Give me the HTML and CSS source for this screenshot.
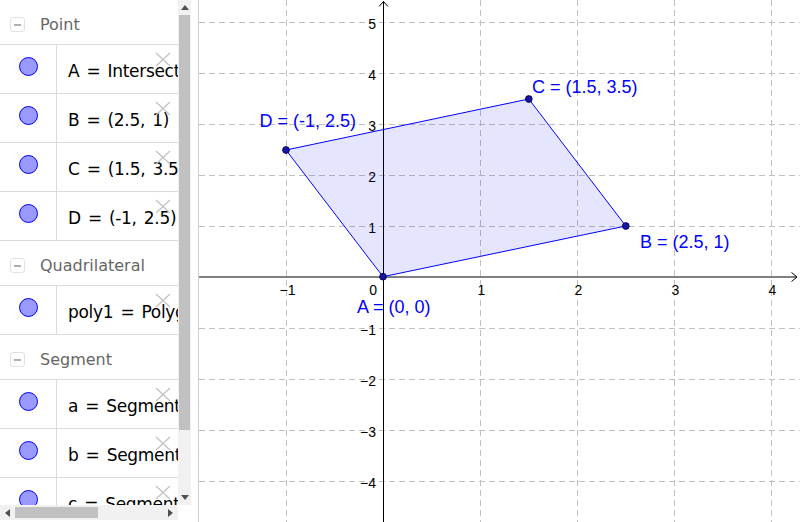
FILE: index.html
```html
<!DOCTYPE html>
<html>
<head>
<meta charset="utf-8">
<link rel="stylesheet" href="styles.css">
</head>
<body>
<div class="app">
  <div class="algebra">
    <div class="list">
      <div class="list-inner">
        <div class="hdr"><span class="toggle"></span><span class="title">Point</span></div>
        <div class="row"><div class="mark"><span class="dot"></span></div><div class="expr">A = Intersect(a, c)</div><svg class="del" viewBox="0 0 16 15"><path d="M1 1L15 14M15 1L1 14"/></svg></div>
        <div class="row"><div class="mark"><span class="dot"></span></div><div class="expr">B = (2.5, 1)</div><svg class="del" viewBox="0 0 16 15"><path d="M1 1L15 14M15 1L1 14"/></svg></div>
        <div class="row"><div class="mark"><span class="dot"></span></div><div class="expr">C = (1.5, 3.5)</div><svg class="del" viewBox="0 0 16 15"><path d="M1 1L15 14M15 1L1 14"/></svg></div>
        <div class="row"><div class="mark"><span class="dot"></span></div><div class="expr">D = (-1, 2.5)</div><svg class="del" viewBox="0 0 16 15"><path d="M1 1L15 14M15 1L1 14"/></svg></div>
        <div class="hdr"><span class="toggle"></span><span class="title">Quadrilateral</span></div>
        <div class="row"><div class="mark"><span class="dot"></span></div><div class="expr">poly1 = Polygon(A, B, C, D)</div><svg class="del" viewBox="0 0 16 15"><path d="M1 1L15 14M15 1L1 14"/></svg></div>
        <div class="hdr"><span class="toggle"></span><span class="title">Segment</span></div>
        <div class="row"><div class="mark"><span class="dot"></span></div><div class="expr">a = Segment(A, B)</div><svg class="del" viewBox="0 0 16 15"><path d="M1 1L15 14M15 1L1 14"/></svg></div>
        <div class="row"><div class="mark"><span class="dot"></span></div><div class="expr">b = Segment(B, C)</div><svg class="del" viewBox="0 0 16 15"><path d="M1 1L15 14M15 1L1 14"/></svg></div>
        <div class="row"><div class="mark"><span class="dot"></span></div><div class="expr">c = Segment(C, D)</div><svg class="del" viewBox="0 0 16 15"><path d="M1 1L15 14M15 1L1 14"/></svg></div>
      </div>
    </div>
    <div class="vscroll">
      <div class="arrow"><svg class="tri" viewBox="0 0 8 5"><path d="M0 5L4 0L8 5Z"/></svg></div>
      <div class="vthumb"></div>
      <div class="spacer"></div>
      <div class="arrow"><svg class="tri" viewBox="0 0 8 5"><path d="M0 0L8 0L4 5Z"/></svg></div>
    </div>
    <div class="hscroll">
      <div class="harrow"><svg class="trih" viewBox="0 0 5 8"><path d="M5 0L5 8L0 4Z"/></svg></div>
      <div class="hthumb"></div>
      <div class="spacer"></div>
      <div class="harrow"><svg class="trih" viewBox="0 0 5 8"><path d="M0 0L5 4L0 8Z"/></svg></div>
    </div>
    <div class="corner"></div>
  </div>
  <div class="split"></div>
  <div class="graph">
    <svg class="plot" viewBox="199 0 601 522" width="601" height="522">
      <g class="grid">
        <line x1="286.5" y1="0" x2="286.5" y2="522"/>
        <line x1="480.5" y1="0" x2="480.5" y2="522"/>
        <line x1="577.5" y1="0" x2="577.5" y2="522"/>
        <line x1="674.5" y1="0" x2="674.5" y2="522"/>
        <line x1="771.5" y1="0" x2="771.5" y2="522"/>
        <line x1="199" y1="22.5" x2="800" y2="22.5"/>
        <line x1="199" y1="73.5" x2="800" y2="73.5"/>
        <line x1="199" y1="124.5" x2="800" y2="124.5"/>
        <line x1="199" y1="175.5" x2="800" y2="175.5"/>
        <line x1="199" y1="226.5" x2="800" y2="226.5"/>
        <line x1="199" y1="328.5" x2="800" y2="328.5"/>
        <line x1="199" y1="379.5" x2="800" y2="379.5"/>
        <line x1="199" y1="430.5" x2="800" y2="430.5"/>
        <line x1="199" y1="481.5" x2="800" y2="481.5"/>
      </g>
      <g class="axis">
        <line x1="199" y1="277" x2="797" y2="277"/>
        <line x1="383.5" y1="1.5" x2="383.5" y2="522"/>
        <path d="M791.5 272.5L797 277L791.5 281.5"/>
        <path d="M379 6.5L383.5 1.5L388 6.5"/>
      </g>
      <g class="ticks">
        <text x="287.5" y="294.5" text-anchor="middle">−1</text>
        <text x="481.5" y="294.5" text-anchor="middle">1</text>
        <text x="578.5" y="294.5" text-anchor="middle">2</text>
        <text x="675.5" y="294.5" text-anchor="middle">3</text>
        <text x="772.5" y="294.5" text-anchor="middle">4</text>
        <text x="377" y="294.5" text-anchor="end">0</text>
        <text x="376" y="28.5" text-anchor="end">5</text>
        <text x="376" y="79.5" text-anchor="end">4</text>
        <text x="376" y="130.5" text-anchor="end">3</text>
        <text x="376" y="181.5" text-anchor="end">2</text>
        <text x="376" y="232.5" text-anchor="end">1</text>
        <text x="376" y="334.5" text-anchor="end">−1</text>
        <text x="376" y="385.5" text-anchor="end">−2</text>
        <text x="376" y="436.5" text-anchor="end">−3</text>
        <text x="376" y="487.5" text-anchor="end">−4</text>
      </g>
      <polygon class="poly" points="383,276.7 625.8,226 528.8,99 286,150"/>
      <g class="pts">
        <circle cx="383" cy="276.7" r="3.4"/>
        <circle cx="625.8" cy="226" r="3.4"/>
        <circle cx="528.8" cy="99" r="3.4"/>
        <circle cx="286" cy="150" r="3.4"/>
      </g>
      <g class="lbls">
        <text x="357" y="313">A = (0, 0)</text>
        <text x="640" y="247.5">B = (2.5, 1)</text>
        <text x="532" y="92.5">C = (1.5, 3.5)</text>
        <text x="259.5" y="126.5">D = (-1, 2.5)</text>
      </g>
    </svg>
  </div>
</div>
</body>
</html>
```
FILE: styles.css
```css
html, body {
  margin: 0;
  padding: 0;
}
body {
  width: 800px;
  height: 522px;
  overflow: hidden;
  background: #fff;
  font-family: "DejaVu Sans", sans-serif;
}
.app {
  display: flex;
  height: 522px;
}
.algebra {
  flex: none;
  display: grid;
  grid-template-columns: 178px 13px;
  grid-template-rows: 505px 15px 2px;
}
.list {
  overflow: hidden;
  background: #fff;
}
.list-inner {
  margin-top: -1px;
}
.hdr {
  height: 44px;
  border-top: 1px solid #dcdcdc;
  display: flex;
  align-items: flex-start;
}
.toggle {
  flex: none;
  width: 15px;
  height: 15px;
  box-sizing: border-box;
  border: 1px solid #e2e2e2;
  border-radius: 3px;
  margin: 17px 0 0 10px;
  position: relative;
}
.toggle::before {
  content: "";
  position: absolute;
  left: 3px;
  top: 6px;
  width: 7px;
  height: 1.5px;
  background: #b0b0b0;
}
.title {
  margin-left: 15px;
  padding-top: 6px;
  line-height: 38px;
  font-size: 16px;
  color: #666;
  white-space: nowrap;
}
.row {
  height: 48px;
  border-top: 1px solid #dcdcdc;
  display: flex;
  position: relative;
}
.mark {
  flex: none;
  width: 56px;
  border-right: 1px solid #dcdcdc;
}
.dot {
  display: block;
  width: 19px;
  height: 19px;
  box-sizing: border-box;
  border: 1px solid #0000ff;
  background: #9999ff;
  border-radius: 50%;
  margin: 12px 0 0 18.5px;
}
.expr {
  padding: 4px 0 0 11px;
  line-height: 44px;
  font-size: 17px;
  color: #000;
  white-space: nowrap;
  word-spacing: 2px;
  letter-spacing: -0.3px;
}
.del {
  position: absolute;
  right: 7px;
  top: 7px;
  width: 16px;
  height: 15px;
  fill: none;
  stroke: #c4c4c4;
  stroke-width: 1.4;
}
.vscroll {
  background: #f1f1f1;
  display: flex;
  flex-direction: column;
}
.arrow {
  height: 15px;
  display: flex;
  align-items: center;
  justify-content: center;
  flex: none;
}
.tri {
  width: 8px;
  height: 5px;
  fill: #505050;
}
.vthumb {
  height: 415px;
  margin: 0 1px;
  background: #c1c1c1;
  flex: none;
}
.spacer {
  flex: 1;
}
.hscroll {
  background: #f1f1f1;
  display: flex;
}
.harrow {
  width: 15px;
  display: flex;
  align-items: center;
  justify-content: center;
  flex: none;
}
.trih {
  width: 5px;
  height: 8px;
  fill: #505050;
}
.hthumb {
  width: 83px;
  margin: 2px 0 2px 0;
  background: #c1c1c1;
  flex: none;
}
.corner {
  background: #fff;
}
.split {
  flex: none;
  width: 7px;
  border-right: 1px solid #d0d0d0;
  background: #fff;
}
.graph {
  flex: 1;
  background: #fff;
}
.plot {
  display: block;
}
.grid line {
  stroke: #c0c0c0;
  stroke-width: 1;
  stroke-dasharray: 6 4;
}
.axis line,
.axis path {
  stroke: #000;
  stroke-width: 1;
  fill: none;
}
.ticks text {
  font-family: "Liberation Sans", Arial, sans-serif;
  font-size: 14px;
  fill: #000;
}
.poly {
  fill: rgba(0, 0, 255, 0.1);
  stroke: #0000ff;
  stroke-width: 1;
}
.pts circle {
  fill: #1515a8;
  stroke: #000040;
  stroke-width: 0.8;
}
.lbls text {
  font-family: "Liberation Sans", Arial, sans-serif;
  font-size: 18px;
  fill: #0000ff;
}
```
